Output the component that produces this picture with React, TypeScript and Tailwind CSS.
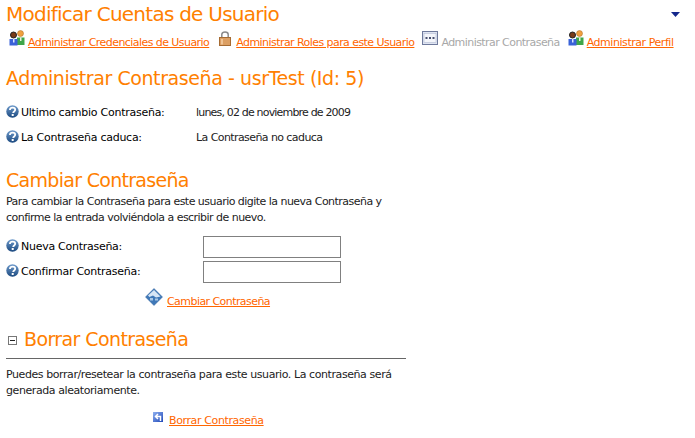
const FONT = "font-['DejaVu_Sans',sans-serif]";

function HelpIcon() {
  return (
    <svg width="13" height="13" viewBox="0 0 13 13" className="-mt-[3px] shrink-0">
      <defs>
        <linearGradient id="helpFill" x1="0" y1="0" x2="0" y2="1">
          <stop offset="0" stopColor="#6f9bcc" />
          <stop offset="1" stopColor="#1c4a80" />
        </linearGradient>
      </defs>
      <circle cx="6.5" cy="6.5" r="6.2" fill="url(#helpFill)" />
      <path d="M3.900 5c.1-1.500 1.200-2.300 2.700-2.300 1.500 0 2.600.8 2.600 2.100 0 1.800-2 1.600-2 3.200" fill="none" stroke="#fff" strokeWidth="1.800" />
      <rect x="5.700" y="9" width="2" height="2" fill="#fff" />
    </svg>
  );
}

function UsersIcon() {
  return (
    <svg width="16" height="16" viewBox="0 0 16 16" className="shrink-0">
      <circle cx="11.500" cy="3.500" r="3" fill="#f0a040" stroke="#a86a20" strokeWidth="0.500" />
      <path d="M8 7.500h7.500v7.500H8z" fill="#3fa64a" />
      <path d="M11 7.500h1.500v3.500H11z" fill="#e8f0e0" />
      <circle cx="4.500" cy="5" r="3" fill="#7a3a18" stroke="#222" strokeWidth="1" />
      <path d="M0.500 9h8v6.500h-8z" fill="#3a62d8" />
      <path d="M4 9h1.500v3.500H4z" fill="#dbe6ff" />
    </svg>
  );
}

function LockIcon() {
  return (
    <svg width="12" height="15" viewBox="0 0 12 15" className="mt-[1px] shrink-0">
      <path d="M2.800 7V3.500C2.800 1.800 4.200 1 6 1s3.200.8 3.200 2.500V7" fill="none" stroke="#8a8a8a" strokeWidth="1.500" />
      <rect x="0.500" y="6.500" width="11" height="8" fill="#dc9f63" stroke="#a66b32" />
      <rect x="2" y="8" width="2" height="5.500" fill="#f0c496" />
    </svg>
  );
}

function PasswordIcon() {
  return (
    <svg width="16" height="14" viewBox="0 0 16 14" className="mt-[1px] shrink-0">
      <rect x="0.500" y="0.500" width="15" height="13" fill="#dfe5f2" stroke="#6f7a9c" />
      <rect x="2" y="2.500" width="12" height="9" fill="#f4f6fb" stroke="#a9b2cc" strokeWidth="0.500" />
      <path d="M3.500 6h2v2h-2zM7 6h2v2H7zM10.500 6h2v2h-2z" fill="#4a5272" />
    </svg>
  );
}

function DiamondIcon() {
  return (
    <svg width="18" height="18" viewBox="0 0 18 18" className="shrink-0">
      <path d="M9 0.500L17.500 9 9 17.500 0.500 9z" fill="#3f78b8" stroke="#2f5f98" strokeWidth="0.500" />
      <path d="M9 2L15.500 8.500 11 9.500 8 7.500 4.500 9 3 7.500z" fill="#d7e6f5" />
      <path d="M5 10h3v2.500H5zM10 10.500h3v2h-3z" fill="#a9c8e6" />
    </svg>
  );
}

function BackIcon() {
  return (
    <svg width="10" height="10" viewBox="0 0 10 10" className="shrink-0">
      <defs>
        <linearGradient id="backFill" x1="0" y1="0" x2="1" y2="1">
          <stop offset="0" stopColor="#8fb0f0" />
          <stop offset="1" stopColor="#1f48b8" />
        </linearGradient>
      </defs>
      <rect width="10" height="10" fill="url(#backFill)" />
      <path d="M7.500 9V4.500H3M5 2L2.500 4.500 5 7" fill="none" stroke="#fff" strokeWidth="1.500" />
    </svg>
  );
}

function MinusBox() {
  return (
    <svg width="9" height="9" viewBox="0 0 9 9" className="mt-[2px] shrink-0">
      <rect x="0.500" y="0.500" width="8" height="8" fill="#fff" stroke="#777" />
      <path d="M2 4.500h5" stroke="#222" />
    </svg>
  );
}

function Caret() {
  return (
    <svg width="9" height="5" viewBox="0 0 9 5">
      <path d="M0 0h9L4.500 5z" fill="#14288c" />
    </svg>
  );
}

function NavLink({ icon, label, disabled, gap, textClass }: { icon: React.ReactNode; label: string; disabled?: boolean; gap: string; textClass?: string }) {
  return (
    <div className={`flex items-start ${gap}`}>
      {icon}
      <span className={`${disabled ? 'mt-[5px] text-[#a8a8a8]' : 'mt-[5px] text-[#ff6600] underline'} ${textClass ?? ''}`}>{label}</span>
    </div>
  );
}

function InfoRow({ label, value, valueClass }: { label: string; value: string; valueClass?: string }) {
  return (
    <div className="flex h-[25px] items-center">
      <div className="flex w-[190px] items-center gap-[2px]">
        <HelpIcon />
        <span className="tracking-[-0.26px] text-black">{label}</span>
      </div>
      <span className={valueClass}>{value}</span>
    </div>
  );
}

function PasswordField({ label }: { label: string }) {
  return (
    <div className="flex h-[25px] items-center">
      <div className="flex w-[197px] items-center gap-[2px]">
        <HelpIcon />
        <span className="mt-[1px] tracking-[-0.27px] text-black">{label}</span>
      </div>
      <input type="password" className="h-[22px] w-[138px] border border-[#808080] bg-white" />
    </div>
  );
}

export default function App() {
  return (
    <div className={`${FONT} h-[438px] w-[695px] overflow-hidden bg-white px-[6px] text-[11px] leading-4 tracking-[-0.56px] text-[#222]`}>
      <div className="flex h-[28px] items-center justify-between pr-[9px]">
        <h1 className="text-[20px] leading-7 tracking-[-0.75px] text-[#ff8000]">Modificar Cuentas de Usuario</h1>
        <Caret />
      </div>
      <nav className="mt-[2px] flex h-[18px] gap-[8px] pl-[3px]">
        <NavLink gap="gap-[3px]" icon={<UsersIcon />} label="Administrar Credenciales de Usuario" />
        <div className="ml-[2px]">
          <NavLink gap="gap-[5px]" icon={<LockIcon />} label="Administrar Roles para este Usuario" />
        </div>
        <NavLink gap="gap-[3px]" icon={<PasswordIcon />} label="Administrar Contraseña" disabled />
        <NavLink gap="gap-[3px]" icon={<UsersIcon />} label="Administrar Perfil" textClass="tracking-[-0.45px]" />
      </nav>
      <h2 className="mt-[16px] text-[19px] leading-7 tracking-[-0.42px] text-[#ff8000]">Administrar Contraseña - usrTest (Id: 5)</h2>
      <div className="mt-[8px]">
        <InfoRow label="Ultimo cambio Contraseña:" value="lunes, 02 de noviembre de 2009" valueClass="tracking-[-0.82px]" />
        <InfoRow label="La Contraseña caduca:" value="La Contraseña no caduca" valueClass="tracking-[-0.58px]" />
      </div>
      <h2 className="mt-[16px] text-[19px] leading-7 tracking-[-0.7px] text-[#ff8000]">Cambiar Contraseña</h2>
      <p className="w-[400px] tracking-[-0.53px]">Para cambiar la Contraseña para este usuario digite la nueva Contraseña y confirme la entrada volviéndola a escribir de nuevo.</p>
      <div className="mt-[8px]">
        <PasswordField label="Nueva Contraseña:" />
        <PasswordField label="Confirmar Contraseña:" />
      </div>
      <div className="ml-[139px] mt-[4px] flex items-start gap-[4px]">
        <DiamondIcon />
        <span className="mt-[6px] text-[#ff6600] underline">Cambiar Contraseña</span>
      </div>
      <div className="mt-[15px] flex h-[28px] items-center gap-[7px] pl-[2px]">
        <MinusBox />
        <h2 className="text-[19px] leading-7 tracking-[-0.6px] text-[#ff8000]">Borrar Contraseña</h2>
      </div>
      <hr className="mt-[5px] w-[400px] border-[#666]" />
      <p className="mt-[8px] w-[400px] tracking-[-0.42px]">Puedes borrar/resetear la contraseña para este usuario. La contraseña será generada aleatoriamente.</p>
      <div className="ml-[147px] mt-[13px] flex items-start gap-[6px]">
        <BackIcon />
        <span className="mt-[1px] tracking-[-0.38px] text-[#ff6600] underline">Borrar Contraseña</span>
      </div>
    </div>
  );
}
